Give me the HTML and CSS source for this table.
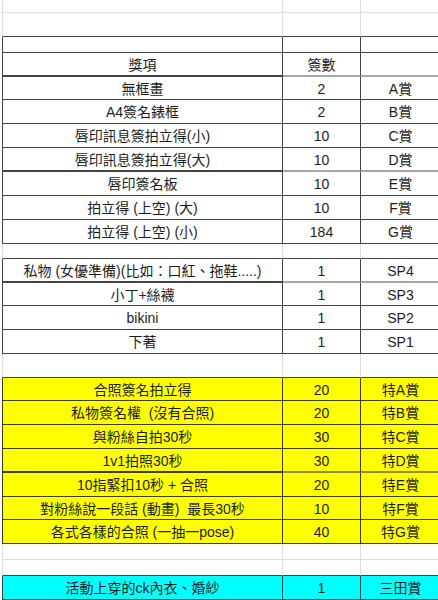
FILE: index.html
```html
<!DOCTYPE html>
<html lang="zh-Hant">
<head>
<meta charset="utf-8">
<title>獎項</title>
<link rel="stylesheet" href="styles.css">
</head>
<body>
<div class="sheet">
  <div class="row h13"><div></div><div></div><div></div></div>
  <div class="row edge"><div></div><div></div><div></div></div>
  <div class="row t h16"><div></div><div></div><div></div></div>
  <div class="row t soft"><div>獎項</div><div>簽數</div><div></div></div>
  <div class="row t h23"><div>無框畫</div><div>2</div><div>A賞</div></div>
  <div class="row t"><div>A4簽名錶框</div><div>2</div><div>B賞</div></div>
  <div class="row t"><div>唇印訊息簽拍立得(小)</div><div>10</div><div>C賞</div></div>
  <div class="row t soft"><div>唇印訊息簽拍立得(大)</div><div>10</div><div>D賞</div></div>
  <div class="row t"><div>唇印簽名板</div><div>10</div><div>E賞</div></div>
  <div class="row t"><div>拍立得 (上空) (大)</div><div>10</div><div>F賞</div></div>
  <div class="row t"><div>拍立得 (上空) (小)</div><div>184</div><div>G賞</div></div>
  <div class="row edge h15"><div></div><div></div><div></div></div>
  <div class="row t soft"><div>私物 (女優準備)(比如：口紅、拖鞋.....)</div><div>1</div><div>SP4</div></div>
  <div class="row t h23"><div>小丁+絲襪</div><div>1</div><div>SP3</div></div>
  <div class="row t"><div>bikini</div><div>1</div><div>SP2</div></div>
  <div class="row t"><div>下著</div><div>1</div><div>SP1</div></div>
  <div class="row edge"><div></div><div></div><div></div></div>
  <div class="row t y h23"><div>合照簽名拍立得</div><div>20</div><div>特A賞</div></div>
  <div class="row t y"><div>私物簽名權&nbsp; (沒有合照)</div><div>20</div><div>特B賞</div></div>
  <div class="row t y"><div>與粉絲自拍30秒</div><div>30</div><div>特C賞</div></div>
  <div class="row t y soft-y"><div>1v1拍照30秒</div><div>30</div><div>特D賞</div></div>
  <div class="row t y"><div>10指緊扣10秒 + 合照</div><div>20</div><div>特E賞</div></div>
  <div class="row t y h23"><div>對粉絲說一段話 (動畫)&nbsp; 最長30秒</div><div>10</div><div>特F賞</div></div>
  <div class="row t y"><div>各式各樣的合照 (一抽一pose)</div><div>40</div><div>特G賞</div></div>
  <div class="row h16"><div></div><div></div><div></div></div>
  <div class="row edge h16"><div></div><div></div><div></div></div>
  <div class="row t cy"><div>活動上穿的ck內衣、婚紗</div><div>1</div><div>三田賞</div></div>
</div>
</body>
</html>
```

FILE: styles.css
```css
html, body {
  margin: 0;
  padding: 0;
  background: #ffffff;
  overflow: hidden;
}

body {
  font-family: "Liberation Sans", "Noto Sans CJK TC", sans-serif;
  font-size: 14px;
  color: #1c1c1c;
}

.sheet {
  padding-left: 2px;
  width: 441px;
}

.row {
  display: grid;
  grid-template-columns: 281px 78px 80px;
  height: 24px;
}

.row > div {
  box-sizing: border-box;
  border-right: 1px solid #dcdcdc;
  border-bottom: 1px solid #dcdcdc;
  display: flex;
  align-items: center;
  justify-content: center;
  white-space: nowrap;
  overflow: hidden;
  line-height: 1;
  padding-top: 1px;
}

.row > div:first-child {
  border-left: 1px solid #dcdcdc;
}

.h13 { height: 13px; }
.h15 { height: 15px; }
.h16 { height: 16px; }
.h23 { height: 23px; }

.edge > div {
  border-bottom-color: #444444;
}

.t > div,
.t > div:first-child {
  border-color: #444444;
}

.soft > div {
  border-bottom: 2px solid #a6a6a6;
}

.y > div {
  background: #ffff00;
}

.y > div,
.y > div:first-child {
  border-color: #3d3d1a;
}

.soft-y > div {
  border-bottom: 2px solid #8f8f3a;
}

.cy > div {
  background: #00ffff;
}

.cy > div,
.cy > div:first-child {
  border-color: #1f4f4f;
}
```
